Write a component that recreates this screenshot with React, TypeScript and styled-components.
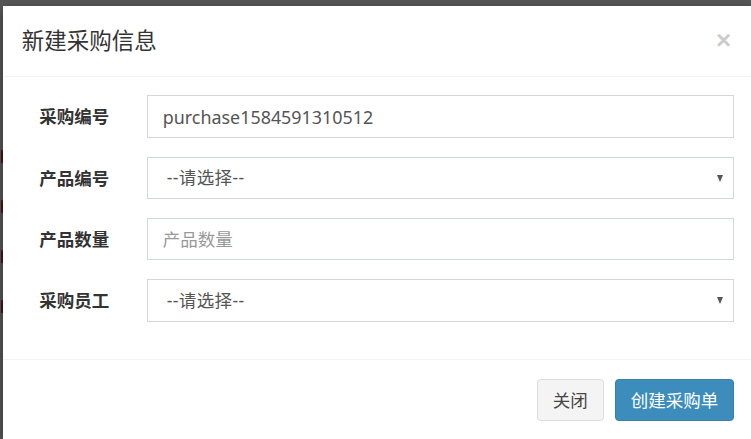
import React from 'react';
import styled, { createGlobalStyle } from 'styled-components';

const GlobalStyle = createGlobalStyle`
  html, body {
    margin: 0;
    padding: 0;
    height: 100%;
    overflow: hidden;
    background: #575757;
  }
  body {
    font-family: "Noto Sans", "Noto Sans CJK SC", sans-serif;
    color: #333;
  }
  * {
    box-sizing: border-box;
  }
`;

const Backdrop = styled.div`
  display: flex;
  padding-top: 6px;
  height: 439px;
  overflow: hidden;
`;

const Strip = styled.div`
  width: 3px;
  flex-shrink: 0;
  display: flex;
  flex-direction: column;
  gap: 37px;
  padding-top: 144px;
`;

const Mark = styled.span`
  display: block;
  width: 2px;
  height: 13px;
  margin-left: 1px;
  background: #4a1515;
  border-top: 2px solid #5a1a1a;
`;

const Modal = styled.div`
  width: 750px;
  flex-shrink: 0;
  background: #fff;
  box-shadow: 0 4px 12px rgba(0, 0, 0, 0.4);
`;

const Header = styled.div`
  display: flex;
  align-items: center;
  justify-content: space-between;
  padding: 18.75px;
  border-bottom: 1px solid #f4f4f4;
`;

const Title = styled.h4`
  margin: 0;
  font-size: 22.5px;
  font-weight: 400;
  line-height: 32px;
  color: #333;
`;

const Close = styled.button`
  border: 0;
  background: none;
  padding: 0;
  margin: -2px 3px 0 0;
  font-family: "Liberation Sans", sans-serif;
  font-size: 26px;
  font-weight: 700;
  line-height: 1;
  color: #000;
  opacity: 0.2;
`;

const Body = styled.form`
  padding: 18.75px;
`;

const Row = styled.div`
  display: grid;
  grid-template-columns: 125px 1fr;
  margin: 0 -18.75px 18.75px;
`;

const Label = styled.label`
  padding: 9px 18.75px 0;
  text-align: right;
  font-size: 17.5px;
  font-weight: 700;
  line-height: 25px;
  color: #333;
`;

const Field = styled.div`
  position: relative;
  padding: 0 18.75px;
`;

const Input = styled.input`
  display: block;
  width: 100%;
  height: 42.5px;
  padding: 7.5px 15px;
  font-family: inherit;
  font-size: 17.9px;
  line-height: 25px;
  color: #555;
  background: #fff;
  border: 1px solid #d2d6de;
  border-radius: 0;
  outline: none;

  &::placeholder {
    color: #999;
    font-size: 17.5px;
  }
`;

const Select = styled.select`
  display: block;
  width: 100%;
  height: 42.5px;
  padding: 7.5px 15px 7.5px 19px;
  font-family: inherit;
  font-size: 17.5px;
  line-height: 25px;
  letter-spacing: 0.4px;
  color: #555;
  background: #fff;
  border: 1px solid #d2d6de;
  border-radius: 0;
  appearance: none;
  outline: none;
`;

const Caret = styled.span`
  position: absolute;
  right: 30px;
  top: 18px;
  width: 0;
  height: 0;
  border-left: 3.5px solid transparent;
  border-right: 3.5px solid transparent;
  border-top: 7px solid #555;
  pointer-events: none;
`;

const Footer = styled.div`
  display: flex;
  justify-content: flex-end;
  gap: 11px;
  padding: 18.75px;
  border-top: 1px solid #f4f4f4;
`;

const Button = styled.button<{ primary?: boolean }>`
  height: 42.5px;
  padding: 7.5px 15px;
  font-family: inherit;
  font-size: 17.5px;
  line-height: 25px;
  border-radius: 3.75px;
  border: 1px solid ${({ primary }) => (primary ? '#367fa9' : '#ddd')};
  background: ${({ primary }) => (primary ? '#3c8dbc' : '#f4f4f4')};
  color: ${({ primary }) => (primary ? '#fff' : '#444')};
`;

const options = ['--请选择--'];

export default function App() {
  return (
    <>
      <GlobalStyle />
      <Backdrop>
        <Strip>
          {[0, 1, 2, 3].map((i) => (
            <Mark key={i} />
          ))}
        </Strip>
        <Modal>
          <Header>
            <Title>新建采购信息</Title>
            <Close type="button">×</Close>
          </Header>
          <Body>
            <Row>
              <Label>采购编号</Label>
              <Field>
                <Input defaultValue="purchase1584591310512" />
              </Field>
            </Row>
            <Row>
              <Label>产品编号</Label>
              <Field>
                <Select>
                  {options.map((o) => (
                    <option key={o}>{o}</option>
                  ))}
                </Select>
                <Caret />
              </Field>
            </Row>
            <Row>
              <Label>产品数量</Label>
              <Field>
                <Input placeholder="产品数量" />
              </Field>
            </Row>
            <Row>
              <Label>采购员工</Label>
              <Field>
                <Select>
                  {options.map((o) => (
                    <option key={o}>{o}</option>
                  ))}
                </Select>
                <Caret />
              </Field>
            </Row>
          </Body>
          <Footer>
            <Button type="button">关闭</Button>
            <Button type="button" primary>
              创建采购单
            </Button>
          </Footer>
        </Modal>
      </Backdrop>
    </>
  );
}
